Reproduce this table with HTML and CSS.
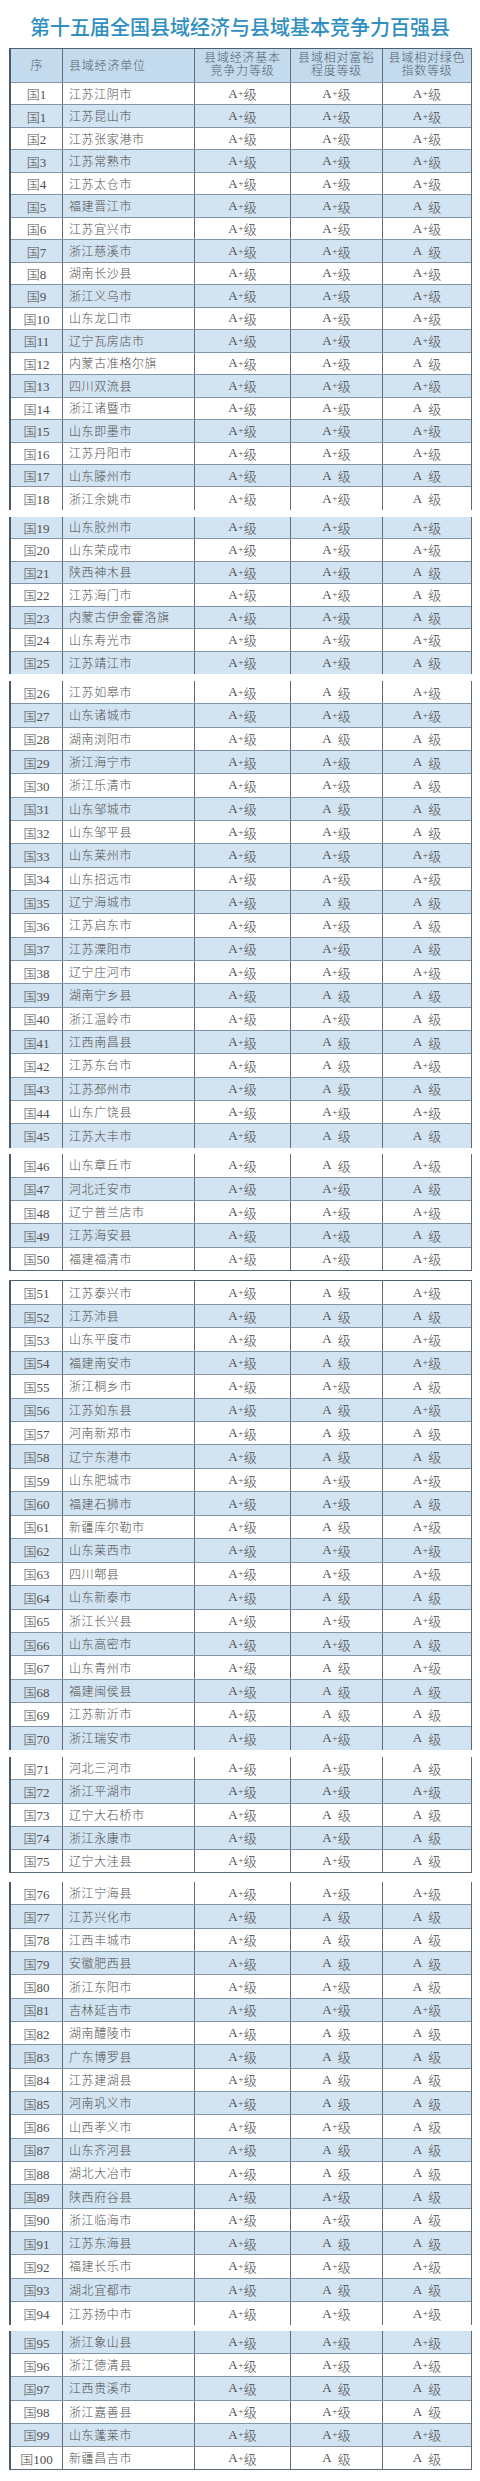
FILE: index.html
```html
<!DOCTYPE html>
<html lang="zh-CN">
<head>
<meta charset="utf-8">
<title>第十五届全国县域经济与县域基本竞争力百强县</title>
<link rel="stylesheet" href="styles.css">
</head>
<body>
<div class="page">
<h1 class="title">第十五届全国县域经济与县域基本竞争力百强县</h1>

<div class="grp g1 bf closed-top open-bottom">
<div class="r head"><span>序</span><span class="n">县域经济单位</span><span class="h2">县域经济基本<br>竞争力等级</span><span class="h2">县域相对富裕<br>程度等级</span><span class="h2">县域相对绿色<br>指数等级</span></div>
<div class="r"><span>国1</span><span class="n">江苏江阴市</span><span>A<sup>+</sup>级</span><span>A<sup>+</sup>级</span><span>A<sup>+</sup>级</span></div>
<div class="r"><span>国1</span><span class="n">江苏昆山市</span><span>A<sup>+</sup>级</span><span>A<sup>+</sup>级</span><span>A<sup>+</sup>级</span></div>
<div class="r"><span>国2</span><span class="n">江苏张家港市</span><span>A<sup>+</sup>级</span><span>A<sup>+</sup>级</span><span>A<sup>+</sup>级</span></div>
<div class="r"><span>国3</span><span class="n">江苏常熟市</span><span>A<sup>+</sup>级</span><span>A<sup>+</sup>级</span><span>A<sup>+</sup>级</span></div>
<div class="r"><span>国4</span><span class="n">江苏太仓市</span><span>A<sup>+</sup>级</span><span>A<sup>+</sup>级</span><span>A<sup>+</sup>级</span></div>
<div class="r"><span>国5</span><span class="n">福建晋江市</span><span>A<sup>+</sup>级</span><span>A<sup>+</sup>级</span><span>A<em> </em>级</span></div>
<div class="r"><span>国6</span><span class="n">江苏宜兴市</span><span>A<sup>+</sup>级</span><span>A<sup>+</sup>级</span><span>A<sup>+</sup>级</span></div>
<div class="r"><span>国7</span><span class="n">浙江慈溪市</span><span>A<sup>+</sup>级</span><span>A<sup>+</sup>级</span><span>A<em> </em>级</span></div>
<div class="r"><span>国8</span><span class="n">湖南长沙县</span><span>A<sup>+</sup>级</span><span>A<sup>+</sup>级</span><span>A<sup>+</sup>级</span></div>
<div class="r"><span>国9</span><span class="n">浙江义乌市</span><span>A<sup>+</sup>级</span><span>A<sup>+</sup>级</span><span>A<sup>+</sup>级</span></div>
<div class="r"><span>国10</span><span class="n">山东龙口市</span><span>A<sup>+</sup>级</span><span>A<sup>+</sup>级</span><span>A<sup>+</sup>级</span></div>
<div class="r"><span>国11</span><span class="n">辽宁瓦房店市</span><span>A<sup>+</sup>级</span><span>A<sup>+</sup>级</span><span>A<sup>+</sup>级</span></div>
<div class="r"><span>国12</span><span class="n">内蒙古准格尔旗</span><span>A<sup>+</sup>级</span><span>A<sup>+</sup>级</span><span>A<em> </em>级</span></div>
<div class="r"><span>国13</span><span class="n">四川双流县</span><span>A<sup>+</sup>级</span><span>A<sup>+</sup>级</span><span>A<sup>+</sup>级</span></div>
<div class="r"><span>国14</span><span class="n">浙江诸暨市</span><span>A<sup>+</sup>级</span><span>A<sup>+</sup>级</span><span>A<em> </em>级</span></div>
<div class="r"><span>国15</span><span class="n">山东即墨市</span><span>A<sup>+</sup>级</span><span>A<sup>+</sup>级</span><span>A<sup>+</sup>级</span></div>
<div class="r"><span>国16</span><span class="n">江苏丹阳市</span><span>A<sup>+</sup>级</span><span>A<sup>+</sup>级</span><span>A<sup>+</sup>级</span></div>
<div class="r"><span>国17</span><span class="n">山东滕州市</span><span>A<sup>+</sup>级</span><span>A<em> </em>级</span><span>A<em> </em>级</span></div>
<div class="r"><span>国18</span><span class="n">浙江余姚市</span><span>A<sup>+</sup>级</span><span>A<sup>+</sup>级</span><span>A<em> </em>级</span></div>
</div>

<div class="grp g2 bf open-bottom">
<div class="r"><span>国19</span><span class="n">山东胶州市</span><span>A<sup>+</sup>级</span><span>A<sup>+</sup>级</span><span>A<sup>+</sup>级</span></div>
<div class="r"><span>国20</span><span class="n">山东荣成市</span><span>A<sup>+</sup>级</span><span>A<sup>+</sup>级</span><span>A<sup>+</sup>级</span></div>
<div class="r"><span>国21</span><span class="n">陕西神木县</span><span>A<sup>+</sup>级</span><span>A<sup>+</sup>级</span><span>A<em> </em>级</span></div>
<div class="r"><span>国22</span><span class="n">江苏海门市</span><span>A<sup>+</sup>级</span><span>A<sup>+</sup>级</span><span>A<em> </em>级</span></div>
<div class="r"><span>国23</span><span class="n">内蒙古伊金霍洛旗</span><span>A<sup>+</sup>级</span><span>A<sup>+</sup>级</span><span>A<em> </em>级</span></div>
<div class="r"><span>国24</span><span class="n">山东寿光市</span><span>A<sup>+</sup>级</span><span>A<sup>+</sup>级</span><span>A<sup>+</sup>级</span></div>
<div class="r"><span>国25</span><span class="n">江苏靖江市</span><span>A<sup>+</sup>级</span><span>A<sup>+</sup>级</span><span>A<em> </em>级</span></div>
</div>

<div class="grp g3 wf open-bottom">
<div class="r"><span>国26</span><span class="n">江苏如皋市</span><span>A<sup>+</sup>级</span><span>A<em> </em>级</span><span>A<sup>+</sup>级</span></div>
<div class="r"><span>国27</span><span class="n">山东诸城市</span><span>A<sup>+</sup>级</span><span>A<sup>+</sup>级</span><span>A<sup>+</sup>级</span></div>
<div class="r"><span>国28</span><span class="n">湖南浏阳市</span><span>A<sup>+</sup>级</span><span>A<em> </em>级</span><span>A<em> </em>级</span></div>
<div class="r"><span>国29</span><span class="n">浙江海宁市</span><span>A<sup>+</sup>级</span><span>A<sup>+</sup>级</span><span>A<em> </em>级</span></div>
<div class="r"><span>国30</span><span class="n">浙江乐清市</span><span>A<sup>+</sup>级</span><span>A<sup>+</sup>级</span><span>A<em> </em>级</span></div>
<div class="r"><span>国31</span><span class="n">山东邹城市</span><span>A<sup>+</sup>级</span><span>A<em> </em>级</span><span>A<em> </em>级</span></div>
<div class="r"><span>国32</span><span class="n">山东邹平县</span><span>A<sup>+</sup>级</span><span>A<sup>+</sup>级</span><span>A<em> </em>级</span></div>
<div class="r"><span>国33</span><span class="n">山东莱州市</span><span>A<sup>+</sup>级</span><span>A<sup>+</sup>级</span><span>A<sup>+</sup>级</span></div>
<div class="r"><span>国34</span><span class="n">山东招远市</span><span>A<sup>+</sup>级</span><span>A<sup>+</sup>级</span><span>A<sup>+</sup>级</span></div>
<div class="r"><span>国35</span><span class="n">辽宁海城市</span><span>A<sup>+</sup>级</span><span>A<em> </em>级</span><span>A<em> </em>级</span></div>
<div class="r"><span>国36</span><span class="n">江苏启东市</span><span>A<sup>+</sup>级</span><span>A<sup>+</sup>级</span><span>A<em> </em>级</span></div>
<div class="r"><span>国37</span><span class="n">江苏溧阳市</span><span>A<sup>+</sup>级</span><span>A<sup>+</sup>级</span><span>A<em> </em>级</span></div>
<div class="r"><span>国38</span><span class="n">辽宁庄河市</span><span>A<sup>+</sup>级</span><span>A<sup>+</sup>级</span><span>A<sup>+</sup>级</span></div>
<div class="r"><span>国39</span><span class="n">湖南宁乡县</span><span>A<sup>+</sup>级</span><span>A<em> </em>级</span><span>A<em> </em>级</span></div>
<div class="r"><span>国40</span><span class="n">浙江温岭市</span><span>A<sup>+</sup>级</span><span>A<sup>+</sup>级</span><span>A<em> </em>级</span></div>
<div class="r"><span>国41</span><span class="n">江西南昌县</span><span>A<sup>+</sup>级</span><span>A<em> </em>级</span><span>A<em> </em>级</span></div>
<div class="r"><span>国42</span><span class="n">江苏东台市</span><span>A<sup>+</sup>级</span><span>A<em> </em>级</span><span>A<sup>+</sup>级</span></div>
<div class="r"><span>国43</span><span class="n">江苏邳州市</span><span>A<sup>+</sup>级</span><span>A<em> </em>级</span><span>A<em> </em>级</span></div>
<div class="r"><span>国44</span><span class="n">山东广饶县</span><span>A<sup>+</sup>级</span><span>A<sup>+</sup>级</span><span>A<sup>+</sup>级</span></div>
<div class="r"><span>国45</span><span class="n">江苏大丰市</span><span>A<sup>+</sup>级</span><span>A<em> </em>级</span><span>A<em> </em>级</span></div>
</div>

<div class="grp g4 wf">
<div class="r"><span>国46</span><span class="n">山东章丘市</span><span>A<sup>+</sup>级</span><span>A<em> </em>级</span><span>A<sup>+</sup>级</span></div>
<div class="r"><span>国47</span><span class="n">河北迁安市</span><span>A<sup>+</sup>级</span><span>A<sup>+</sup>级</span><span>A<em> </em>级</span></div>
<div class="r"><span>国48</span><span class="n">辽宁普兰店市</span><span>A<sup>+</sup>级</span><span>A<sup>+</sup>级</span><span>A<sup>+</sup>级</span></div>
<div class="r"><span>国49</span><span class="n">江苏海安县</span><span>A<sup>+</sup>级</span><span>A<sup>+</sup>级</span><span>A<em> </em>级</span></div>
<div class="r"><span>国50</span><span class="n">福建福清市</span><span>A<sup>+</sup>级</span><span>A<sup>+</sup>级</span><span>A<sup>+</sup>级</span></div>
</div>

<div class="grp g5 wf closed-top open-bottom">
<div class="r"><span>国51</span><span class="n">江苏泰兴市</span><span>A<sup>+</sup>级</span><span>A<em> </em>级</span><span>A<sup>+</sup>级</span></div>
<div class="r"><span>国52</span><span class="n">江苏沛县</span><span>A<sup>+</sup>级</span><span>A<em> </em>级</span><span>A<em> </em>级</span></div>
<div class="r"><span>国53</span><span class="n">山东平度市</span><span>A<sup>+</sup>级</span><span>A<em> </em>级</span><span>A<sup>+</sup>级</span></div>
<div class="r"><span>国54</span><span class="n">福建南安市</span><span>A<sup>+</sup>级</span><span>A<em> </em>级</span><span>A<sup>+</sup>级</span></div>
<div class="r"><span>国55</span><span class="n">浙江桐乡市</span><span>A<sup>+</sup>级</span><span>A<sup>+</sup>级</span><span>A<em> </em>级</span></div>
<div class="r"><span>国56</span><span class="n">江苏如东县</span><span>A<sup>+</sup>级</span><span>A<em> </em>级</span><span>A<sup>+</sup>级</span></div>
<div class="r"><span>国57</span><span class="n">河南新郑市</span><span>A<sup>+</sup>级</span><span>A<em> </em>级</span><span>A<em> </em>级</span></div>
<div class="r"><span>国58</span><span class="n">辽宁东港市</span><span>A<sup>+</sup>级</span><span>A<em> </em>级</span><span>A<em> </em>级</span></div>
<div class="r"><span>国59</span><span class="n">山东肥城市</span><span>A<sup>+</sup>级</span><span>A<sup>+</sup>级</span><span>A<sup>+</sup>级</span></div>
<div class="r"><span>国60</span><span class="n">福建石狮市</span><span>A<sup>+</sup>级</span><span>A<sup>+</sup>级</span><span>A<em> </em>级</span></div>
<div class="r"><span>国61</span><span class="n">新疆库尔勒市</span><span>A<sup>+</sup>级</span><span>A<em> </em>级</span><span>A<sup>+</sup>级</span></div>
<div class="r"><span>国62</span><span class="n">山东莱西市</span><span>A<sup>+</sup>级</span><span>A<sup>+</sup>级</span><span>A<sup>+</sup>级</span></div>
<div class="r"><span>国63</span><span class="n">四川郫县</span><span>A<sup>+</sup>级</span><span>A<sup>+</sup>级</span><span>A<sup>+</sup>级</span></div>
<div class="r"><span>国64</span><span class="n">山东新泰市</span><span>A<sup>+</sup>级</span><span>A<em> </em>级</span><span>A<em> </em>级</span></div>
<div class="r"><span>国65</span><span class="n">浙江长兴县</span><span>A<sup>+</sup>级</span><span>A<sup>+</sup>级</span><span>A<sup>+</sup>级</span></div>
<div class="r"><span>国66</span><span class="n">山东高密市</span><span>A<sup>+</sup>级</span><span>A<sup>+</sup>级</span><span>A<em> </em>级</span></div>
<div class="r"><span>国67</span><span class="n">山东青州市</span><span>A<sup>+</sup>级</span><span>A<em> </em>级</span><span>A<sup>+</sup>级</span></div>
<div class="r"><span>国68</span><span class="n">福建闽侯县</span><span>A<sup>+</sup>级</span><span>A<em> </em>级</span><span>A<em> </em>级</span></div>
<div class="r"><span>国69</span><span class="n">江苏新沂市</span><span>A<sup>+</sup>级</span><span>A<em> </em>级</span><span>A<em> </em>级</span></div>
<div class="r"><span>国70</span><span class="n">浙江瑞安市</span><span>A<sup>+</sup>级</span><span>A<sup>+</sup>级</span><span>A<em> </em>级</span></div>
</div>

<div class="grp g6 wf">
<div class="r"><span>国71</span><span class="n">河北三河市</span><span>A<sup>+</sup>级</span><span>A<sup>+</sup>级</span><span>A<em> </em>级</span></div>
<div class="r"><span>国72</span><span class="n">浙江平湖市</span><span>A<sup>+</sup>级</span><span>A<sup>+</sup>级</span><span>A<sup>+</sup>级</span></div>
<div class="r"><span>国73</span><span class="n">辽宁大石桥市</span><span>A<sup>+</sup>级</span><span>A<em> </em>级</span><span>A<em> </em>级</span></div>
<div class="r"><span>国74</span><span class="n">浙江永康市</span><span>A<sup>+</sup>级</span><span>A<sup>+</sup>级</span><span>A<em> </em>级</span></div>
<div class="r"><span>国75</span><span class="n">辽宁大洼县</span><span>A<sup>+</sup>级</span><span>A<sup>+</sup>级</span><span>A<em> </em>级</span></div>
</div>

<div class="grp g7 wf open-bottom">
<div class="r"><span>国76</span><span class="n">浙江宁海县</span><span>A<sup>+</sup>级</span><span>A<sup>+</sup>级</span><span>A<sup>+</sup>级</span></div>
<div class="r"><span>国77</span><span class="n">江苏兴化市</span><span>A<sup>+</sup>级</span><span>A<em> </em>级</span><span>A<em> </em>级</span></div>
<div class="r"><span>国78</span><span class="n">江西丰城市</span><span>A<sup>+</sup>级</span><span>A<em> </em>级</span><span>A<em> </em>级</span></div>
<div class="r"><span>国79</span><span class="n">安徽肥西县</span><span>A<sup>+</sup>级</span><span>A<em> </em>级</span><span>A<em> </em>级</span></div>
<div class="r"><span>国80</span><span class="n">浙江东阳市</span><span>A<sup>+</sup>级</span><span>A<sup>+</sup>级</span><span>A<em> </em>级</span></div>
<div class="r"><span>国81</span><span class="n">吉林延吉市</span><span>A<sup>+</sup>级</span><span>A<sup>+</sup>级</span><span>A<sup>+</sup>级</span></div>
<div class="r"><span>国82</span><span class="n">湖南醴陵市</span><span>A<sup>+</sup>级</span><span>A<em> </em>级</span><span>A<em> </em>级</span></div>
<div class="r"><span>国83</span><span class="n">广东博罗县</span><span>A<sup>+</sup>级</span><span>A<em> </em>级</span><span>A<em> </em>级</span></div>
<div class="r"><span>国84</span><span class="n">江苏建湖县</span><span>A<sup>+</sup>级</span><span>A<em> </em>级</span><span>A<em> </em>级</span></div>
<div class="r"><span>国85</span><span class="n">河南巩义市</span><span>A<sup>+</sup>级</span><span>A<em> </em>级</span><span>A<em> </em>级</span></div>
<div class="r"><span>国86</span><span class="n">山西孝义市</span><span>A<sup>+</sup>级</span><span>A<sup>+</sup>级</span><span>A<em> </em>级</span></div>
<div class="r"><span>国87</span><span class="n">山东齐河县</span><span>A<sup>+</sup>级</span><span>A<em> </em>级</span><span>A<em> </em>级</span></div>
<div class="r"><span>国88</span><span class="n">湖北大冶市</span><span>A<sup>+</sup>级</span><span>A<em> </em>级</span><span>A<em> </em>级</span></div>
<div class="r"><span>国89</span><span class="n">陕西府谷县</span><span>A<sup>+</sup>级</span><span>A<sup>+</sup>级</span><span>A<em> </em>级</span></div>
<div class="r"><span>国90</span><span class="n">浙江临海市</span><span>A<sup>+</sup>级</span><span>A<sup>+</sup>级</span><span>A<em> </em>级</span></div>
<div class="r"><span>国91</span><span class="n">江苏东海县</span><span>A<sup>+</sup>级</span><span>A<em> </em>级</span><span>A<em> </em>级</span></div>
<div class="r"><span>国92</span><span class="n">福建长乐市</span><span>A<sup>+</sup>级</span><span>A<sup>+</sup>级</span><span>A<sup>+</sup>级</span></div>
<div class="r"><span>国93</span><span class="n">湖北宜都市</span><span>A<sup>+</sup>级</span><span>A<em> </em>级</span><span>A<em> </em>级</span></div>
<div class="r"><span>国94</span><span class="n">江苏扬中市</span><span>A<sup>+</sup>级</span><span>A<sup>+</sup>级</span><span>A<sup>+</sup>级</span></div>
</div>

<div class="grp g8 bf">
<div class="r"><span>国95</span><span class="n">浙江象山县</span><span>A<sup>+</sup>级</span><span>A<sup>+</sup>级</span><span>A<sup>+</sup>级</span></div>
<div class="r"><span>国96</span><span class="n">浙江德清县</span><span>A<sup>+</sup>级</span><span>A<sup>+</sup>级</span><span>A<sup>+</sup>级</span></div>
<div class="r"><span>国97</span><span class="n">江西贵溪市</span><span>A<sup>+</sup>级</span><span>A<em> </em>级</span><span>A<em> </em>级</span></div>
<div class="r"><span>国98</span><span class="n">浙江嘉善县</span><span>A<sup>+</sup>级</span><span>A<sup>+</sup>级</span><span>A<em> </em>级</span></div>
<div class="r"><span>国99</span><span class="n">山东蓬莱市</span><span>A<sup>+</sup>级</span><span>A<sup>+</sup>级</span><span>A<sup>+</sup>级</span></div>
<div class="r"><span>国100</span><span class="n">新疆昌吉市</span><span>A<sup>+</sup>级</span><span>A<em> </em>级</span><span>A<em> </em>级</span></div>
</div>

</div>
</body>
</html>
```
FILE: styles.css
```css
html, body {
  margin: 0;
  padding: 0;
  background: #ffffff;
}

.page {
  width: 480px;
  height: 2481px;
  overflow: hidden;
  background: #ffffff;
}

.title {
  margin: 0;
  box-sizing: border-box;
  height: 47.5px;
  padding-top: 17px;
  font-family: "Noto Sans CJK SC", sans-serif;
  font-weight: 500;
  font-size: 20px;
  line-height: 20px;
  color: #2f8fc0;
  text-align: center;
  letter-spacing: 0;
}

.grp {
  --rh: 23.33px;
  margin-left: 9px;
  width: 463px;
  box-sizing: border-box;
  border-left: 2px solid #4b5b6c;
  border-right: 1px solid #5b6b7c;
  font-family: "Liberation Serif", "Noto Sans CJK SC", serif;
  color: #505050;
}

.closed-top { border-top: 1px solid #4f6070; }

.g1 { --rh: 22.47px; margin-top: 0; }
.g2 { --rh: 22.5px; margin-top: 6.6px; }
.g3 { --rh: 23.33px; margin-top: 7px; }
.g4 { --rh: 23.33px; margin-top: 6.7px; }
.g5 { --rh: 23.45px; margin-top: 9.5px; }
.g6 { --rh: 23.2px; margin-top: 7px; }
.g7 { --rh: 23.33px; margin-top: 9px; }
.g8 { --rh: 23.2px; margin-top: 5.7px; }

.r {
  display: grid;
  grid-template-columns: 52px 132px 96px 92px 88px;
  height: var(--rh);
  box-sizing: border-box;
  border-bottom: 1px solid #8395a6;
  background: #ffffff;
}

.bf .r:nth-child(odd),
.wf .r:nth-child(even) {
  background: #d2e3f2;
}

.open-bottom .r:last-child { border-bottom: none; }
.g4 .r:last-child, .g6 .r:last-child, .g8 .r:last-child { border-bottom: 1px solid #5a6a7a; }

.r > span {
  display: flex;
  align-items: center;
  justify-content: center;
  box-sizing: border-box;
  border-right: 1px solid #5d6d7e;
  font-size: 13px;
  font-weight: 300;
  white-space: nowrap;
}

.r > span:last-child { border-right: none; }

.r > span.n {
  justify-content: flex-start;
  padding-left: 6px;
  font-size: 12px;
  letter-spacing: 0.6px;
}

.r sup {
  display: inline-block;
  width: 6px;
  font-size: 9px;
  line-height: 1;
  vertical-align: 5px;
  text-align: center;
}

.r em {
  display: inline-block;
  width: 6px;
  font-style: normal;
}

.head {
  height: 34.5px;
  background: #c4dbee !important;
}

.head > span {
  color: #55606c;
  font-size: 12px;
}

.head > span.n { letter-spacing: 0.8px; }

.head > span.h2 {
  text-align: center;
  line-height: 13px;
  letter-spacing: 0.8px;
}
```
